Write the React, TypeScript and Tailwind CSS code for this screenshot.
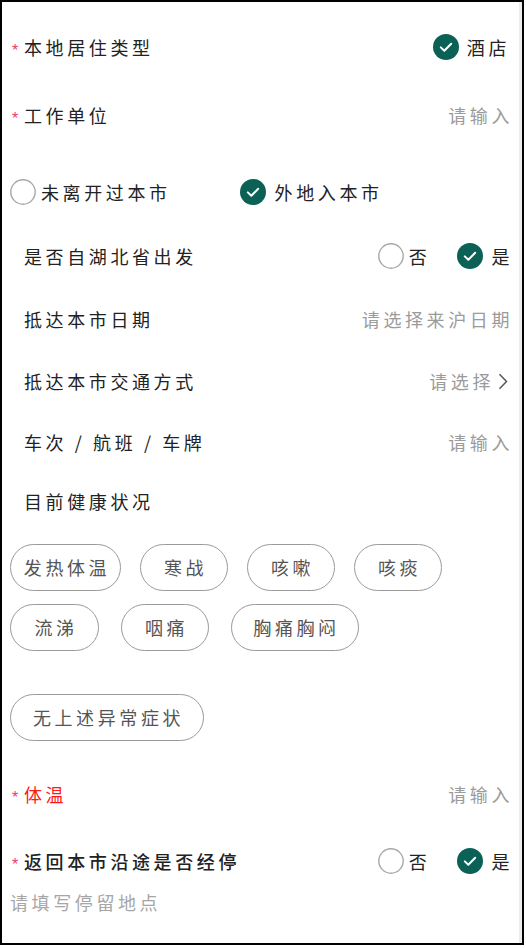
import React from "react";

const GREEN = "#0c6157";

function Checked() {
  return (
    <svg width="26" height="26" viewBox="0 0 26 26" className="shrink-0">
      <circle cx="13" cy="13" r="13" fill={GREEN} />
      <path d="M7.8 13.4 L11.3 16.8 L18.2 9.8" fill="none" stroke="#fff" strokeWidth="2" strokeLinecap="round" strokeLinejoin="round" />
    </svg>
  );
}

function Unchecked() {
  return (
    <svg width="26" height="26" viewBox="0 0 26 26" className="shrink-0">
      <circle cx="13" cy="13" r="12.2" fill="#fff" stroke="#a8a8a8" strokeWidth="1.4" />
    </svg>
  );
}

function Star() {
  return (
    <span className="w-[8px] mr-[4px] text-[16px] leading-none tracking-normal text-[#f03a72] translate-y-[4px] font-['Liberation_Sans',sans-serif]">
      *
    </span>
  );
}

function Label({ children, star, red, bold }: { children: React.ReactNode; star?: boolean; red?: boolean; bold?: boolean }) {
  return (
    <div className={`flex items-center ${star ? "pl-[10px]" : "pl-[22px]"}`}>
      {star && <Star />}
      <span className={`${red ? "text-[#ff1a1a]" : "text-[#222]"} ${bold ? "font-medium" : ""}`}>{children}</span>
    </div>
  );
}

function Placeholder({ children }: { children: React.ReactNode }) {
  return <span className="text-[#9b9b9b]">{children}</span>;
}

function YesNo() {
  return (
    <div className="flex items-center">
      <Unchecked />
      <span className="ml-[5px] text-[#222]">否</span>
      <div className="w-[27px]" />
      <Checked />
      <span className="ml-[8px] text-[#222]">是</span>
    </div>
  );
}

function Chip({ children, w }: { children: React.ReactNode; w: number }) {
  const cls: Record<number, string> = {
    111: "w-[111px]",
    88: "w-[88px]",
    89: "w-[89px]",
    128: "w-[128px]",
    194: "w-[194px]",
  };
  return (
    <div className={`${cls[w]} h-[47px] shrink-0 rounded-full border border-[#9a9a9a] flex items-center justify-center text-[#555] pl-[3px]`}>
      {children}
    </div>
  );
}

export default function App() {
  return (
    <div className="w-[524px] h-[945px] border-2 border-black bg-white flex font-['Noto_Sans_CJK_SC','Noto_Sans',sans-serif] text-[18px] tracking-[3.6px] overflow-hidden">
      <div className="flex-1 flex flex-col pr-[6px]">
        {/* Row 1 */}
        <div className="mt-[20px] h-[50px] flex items-center justify-between">
          <Label star>本地居住类型</Label>
          <div className="flex items-center mr-[3px]">
            <Checked />
            <span className="ml-[8px] text-[#222]">酒店</span>
          </div>
        </div>
        {/* Row 2 */}
        <div className="mt-[18px] h-[50px] flex items-center justify-between">
          <Label star>工作单位</Label>
          <Placeholder>请输入</Placeholder>
        </div>
        {/* Row 3 */}
        <div className="mt-[27px] h-[50px] flex items-center pl-[8px]">
          <Unchecked />
          <span className="ml-[5px] text-[#222]">未离开过本市</span>
          <div className="w-[69px]" />
          <Checked />
          <span className="ml-[9px] text-[#222]">外地入本市</span>
        </div>
        {/* Row 4 */}
        <div className="mt-[14px] h-[50px] flex items-center justify-between">
          <Label>是否自湖北省出发</Label>
          <YesNo />
        </div>
        {/* Row 5 */}
        <div className="mt-[13px] h-[50px] flex items-center justify-between">
          <Label>抵达本市日期</Label>
          <Placeholder>请选择来沪日期</Placeholder>
        </div>
        {/* Row 6 */}
        <div className="mt-[12px] h-[50px] flex items-center justify-between">
          <Label>抵达本市交通方式</Label>
          <div className="flex items-center">
            <Placeholder>请选择</Placeholder>
            <svg width="10" height="17" viewBox="0 0 10 17" className="ml-[4px] mr-[5px]">
              <path d="M1.5 1.2 L8.5 8.5 L1.5 15.8" fill="none" stroke="#555" strokeWidth="1.5" />
            </svg>
          </div>
        </div>
        {/* Row 7 */}
        <div className="mt-[11px] h-[50px] flex items-center justify-between">
          <Label>车次 / 航班 / 车牌</Label>
          <Placeholder>请输入</Placeholder>
        </div>
        {/* Row 8 */}
        <div className="mt-[9px] h-[50px] flex items-center">
          <Label>目前健康状况</Label>
        </div>
        {/* Chips */}
        <div className="mt-[18px] pl-[8px] flex gap-[19px]">
          <Chip w={111}>发热体温</Chip>
          <Chip w={88}>寒战</Chip>
          <Chip w={88}>咳嗽</Chip>
          <Chip w={88}>咳痰</Chip>
        </div>
        <div className="mt-[13px] pl-[8px] flex gap-[22px]">
          <Chip w={89}>流涕</Chip>
          <Chip w={88}>咽痛</Chip>
          <Chip w={128}>胸痛胸闷</Chip>
        </div>
        <div className="mt-[43px] pl-[8px] flex">
          <Chip w={194}>无上述异常症状</Chip>
        </div>
        {/* 体温 */}
        <div className="mt-[28px] h-[50px] flex items-center justify-between">
          <Label star red>体温</Label>
          <Placeholder>请输入</Placeholder>
        </div>
        {/* 返回 */}
        <div className="mt-[17px] h-[50px] flex items-center justify-between">
          <Label star bold>返回本市沿途是否经停</Label>
          <YesNo />
        </div>
        <div className="pl-[8px] h-[32px] flex items-center text-[#a6a6a6]">请填写停留地点</div>
      </div>
      <div className="w-[3px] bg-[#ececec]" />
    </div>
  );
}
